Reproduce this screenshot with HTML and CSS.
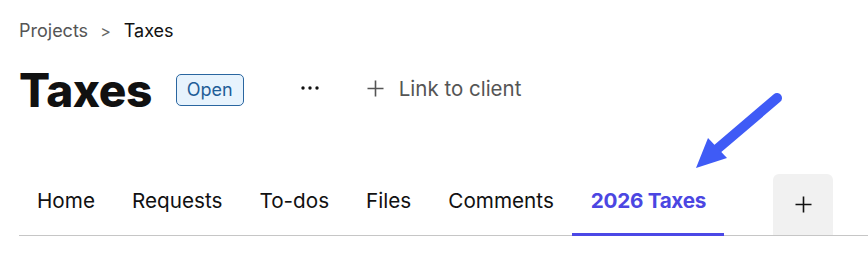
FILE: index.html
```html
<!DOCTYPE html>
<html>
<head>
<meta charset="utf-8">
<link rel="stylesheet" href="styles.css">
</head>
<body>
<div class="page">
  <nav class="crumbs">
    <span class="crumb-link">Projects</span>
    <span class="crumb-sep">&gt;</span>
    <span class="crumb-current">Taxes</span>
  </nav>
  <header class="head">
    <h1 class="title">Taxes</h1>
    <span class="badge">Open</span>
    <span class="more">
      <svg width="18" height="4" viewBox="0 0 18 4"><circle cx="2" cy="2" r="1.7" fill="#111"/><circle cx="9" cy="2" r="1.7" fill="#111"/><circle cx="16" cy="2" r="1.7" fill="#111"/></svg>
    </span>
    <span class="link-client">
      <svg width="17" height="17" viewBox="0 0 17 17"><path d="M8.5 0.5v16M0.5 8.5h16" stroke="#555" stroke-width="1.6"/></svg>
      <span>Link to client</span>
    </span>
  </header>
  <div class="tabs">
    <span class="tab">Home</span>
    <span class="tab">Requests</span>
    <span class="tab">To-dos</span>
    <span class="tab">Files</span>
    <span class="tab">Comments</span>
    <span class="tab active">2026 Taxes</span>
    <span class="add-tab">
      <svg width="17" height="17" viewBox="0 0 17 17"><path d="M8.5 0.5v16M0.5 8.5h16" stroke="#111" stroke-width="1.6"/></svg>
    </span>
  </div>
  <svg class="arrow" width="100" height="90" viewBox="690 85 100 90">
    <path d="M777 98 L716 150" stroke="#3f5bf6" stroke-width="10" stroke-linecap="round" fill="none"/>
    <polygon points="696,168 708,138 727,158" fill="#3f5bf6"/>
  </svg>
</div>
</body>
</html>
```
FILE: styles.css
```css
* { box-sizing: border-box; }
html, body { margin: 0; padding: 0; background: #fff; }
body { font-family: Inter, "Noto Sans", sans-serif; color: #111; }
.page { position: relative; width: 868px; height: 263px; padding: 20px 0 0 19px; }
.crumbs { display: flex; align-items: center; font-size: 18px; line-height: 22px; height: 22px; }
.crumb-link { color: #555; }
.crumb-sep { color: #666; margin: 0 13px 0 12px; font-size: 16px; }
.crumb-current { color: #111; }
.head { display: flex; align-items: center; margin-top: 23px; height: 50px; }
.title { margin: 0; font-size: 46px; font-weight: 800; letter-spacing: -0.5px; line-height: 50px; color: #111; }
.badge { margin-left: 24px; height: 32px; padding: 0 10px; border: 1px solid #2a66a0; border-radius: 5px; background: #e7f3fd; color: #1f5e98; font-size: 18px; line-height: 30px; }
.more { margin-left: 57px; display: flex; align-items: center; margin-top: -4px; }
.link-client { margin-left: 48px; display: flex; align-items: center; gap: 15px; color: #555; font-size: 20.5px; margin-top: -4px; }
.tabs { display: flex; align-items: flex-end; margin-top: 59px; border-bottom: 1px solid #c6c6c6; height: 62px; }
.tab { padding: 0 18.5px; height: 50px; line-height: 30px; font-size: 20.7px; color: #111; border-bottom: 3px solid transparent; margin-bottom: -1px; }
.tab:first-child { padding-left: 18px; }
.tab.active { color: #4b46e2; font-weight: 700; letter-spacing: -0.3px; border-bottom-color: #4b48e6; }
.add-tab { margin-left: 49px; width: 60px; height: 61px; background: #f1f1f1; border-radius: 6px 6px 0 0; display: flex; align-items: center; justify-content: center; }
.arrow { position: absolute; left: 690px; top: 85px; }
```
